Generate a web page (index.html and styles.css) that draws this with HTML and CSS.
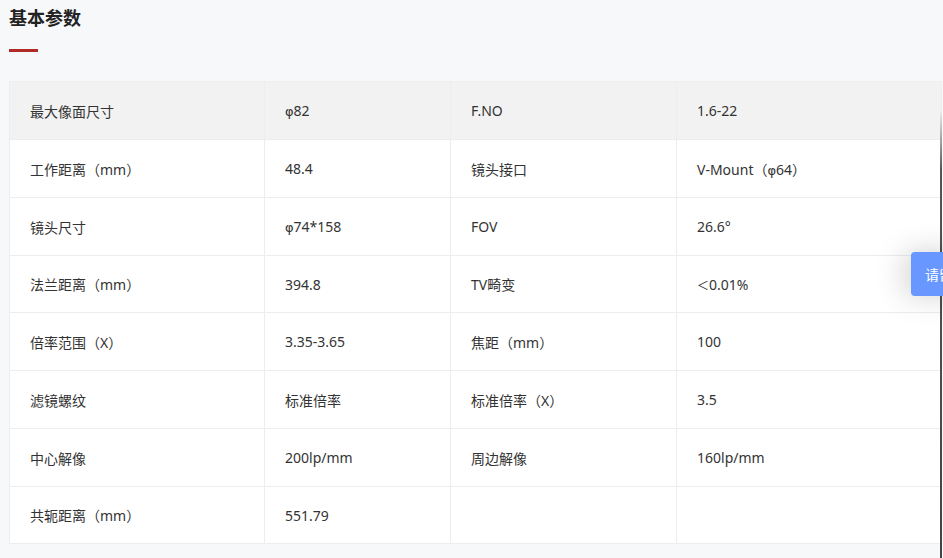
FILE: index.html
```html
<!DOCTYPE html>
<html lang="zh-CN">
<head>
<meta charset="utf-8">
<title>基本参数</title>
<link rel="stylesheet" href="styles.css">
</head>
<body>
<div class="page">
  <h2 class="title">基本参数</h2>
  <div class="title-bar"></div>
  <table class="params">
    <colgroup>
      <col class="c1"><col class="c2"><col class="c3"><col class="c4">
    </colgroup>
    <tbody>
      <tr class="head"><td>最大像面尺寸</td><td><span class="phi">φ</span>82</td><td>F.NO</td><td>1.6-22</td></tr>
      <tr><td>工作距离（mm）</td><td>48.4</td><td>镜头接口</td><td>V-Mount（<span class="phi">φ</span>64）</td></tr>
      <tr><td>镜头尺寸</td><td><span class="phi">φ</span>74*158</td><td>FOV</td><td>26.6°</td></tr>
      <tr><td>法兰距离（mm）</td><td>394.8</td><td>TV畸变</td><td><span class="lt">＜</span>0.01%</td></tr>
      <tr><td>倍率范围（X）</td><td>3.35-3.65</td><td>焦距（mm）</td><td>100</td></tr>
      <tr><td>滤镜螺纹</td><td>标准倍率</td><td>标准倍率（X）</td><td>3.5</td></tr>
      <tr><td>中心解像</td><td>200lp/mm</td><td>周边解像</td><td>160lp/mm</td></tr>
      <tr><td>共轭距离（mm）</td><td>551.79</td><td></td><td></td></tr>
    </tbody>
  </table>
</div>
<div class="edge-line"></div>
<div class="float-btn">请留言</div>
</body>
</html>
```
FILE: styles.css
```css
html, body {
  margin: 0;
  padding: 0;
  background: #f7f8fa;
  overflow: hidden;
}
body {
  font-family: "Noto Sans", "Noto Sans CJK SC", sans-serif;
  color: #333;
  height: 558px;
  position: relative;
}
.page {
  padding: 4px 0 0 9px;
}
.title {
  margin: 0;
  font-size: 18px;
  line-height: 26px;
  font-weight: bold;
  color: #222;
  font-family: "Noto Sans CJK SC", sans-serif;
}
.title-bar {
  width: 29px;
  height: 3px;
  background: #b12a27;
  margin-top: 19px;
}
.params {
  margin-top: 29px;
  width: 932px;
  border-collapse: collapse;
  table-layout: fixed;
  background: #fff;
  font-size: 14px;
}
.c1 { width: 255px; }
.c2 { width: 186px; }
.c3 { width: 226px; }
.c4 { width: 265px; }
.params td {
  height: 58px;
  padding: 0 0 0 20px;
  border: 1px solid #ededed;
  box-sizing: border-box;
  color: #333;
  vertical-align: middle;
  white-space: nowrap;
}
.params tr:nth-child(4) td,
.params tr:nth-child(8) td {
  height: 57px;
}
.params tr.head td {
  background: #f2f2f2;
}
.phi {
  font-family: "DejaVu Sans", sans-serif;
  font-size: 13px;
}
.lt {
  display: inline-block;
  font-size: 12px;
  width: 12px;
  text-align: center;
}
.edge-line {
  position: absolute;
  right: 1px;
  top: 110px;
  bottom: 0;
  width: 2px;
  background: linear-gradient(to bottom, rgba(80,80,80,0) 0, #555 60px, #444 100%);
}
.float-btn {
  position: absolute;
  left: 911px;
  top: 252px;
  width: 60px;
  height: 44px;
  box-sizing: border-box;
  padding-left: 14px;
  line-height: 44px;
  background: #6797ff;
  color: #fff;
  font-size: 14px;
  font-family: "Noto Sans CJK SC", sans-serif;
  border-radius: 4px 0 0 4px;
  box-shadow: -6px 0 30px rgba(0,0,0,0.18);
  white-space: nowrap;
}
```
